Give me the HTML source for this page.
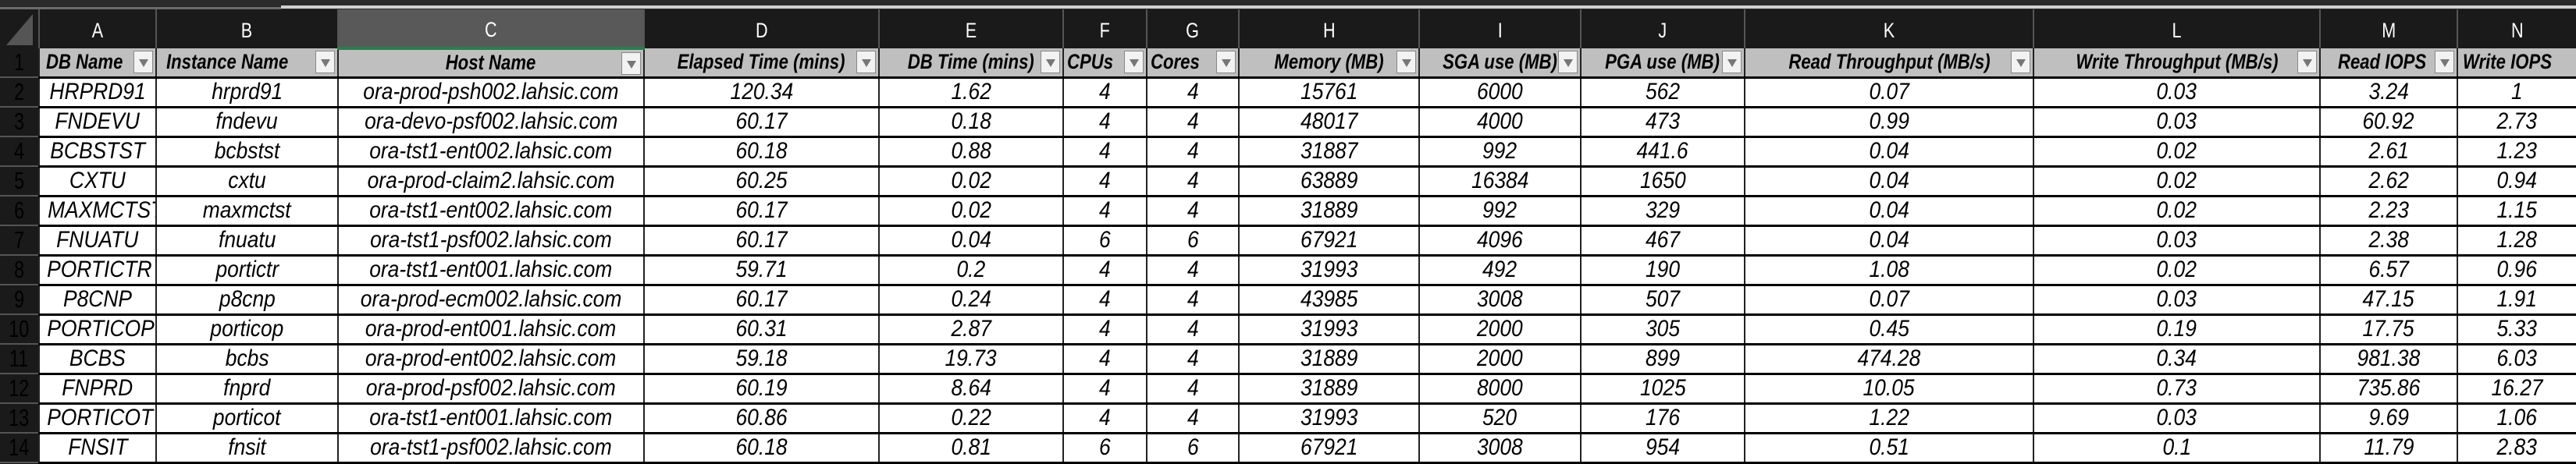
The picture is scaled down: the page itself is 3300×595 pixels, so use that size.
<!DOCTYPE html>
<html><head><meta charset="utf-8"><style>
*{margin:0;padding:0;box-sizing:border-box}
body{width:3300px;height:594px;background:#1a1a1a;overflow:hidden;position:relative;font-family:"Liberation Sans",sans-serif}
#top{position:absolute;left:0;top:0;width:3300px;height:12px;background:#2a2a2a}
#top .l{position:absolute;left:360px;top:7px;width:2940px;height:4px;background:#d0d0d0}
#top .l2{position:absolute;left:0;top:9px;width:360px;height:3px;background:#6a6a6a}
table{position:absolute;left:0;top:12px;border-collapse:collapse;table-layout:fixed;width:3300px}
td{overflow:hidden;white-space:nowrap;text-align:center;padding:0}
td span.t{display:inline-block;transform:scaleX(0.8);transform-origin:center}
tr.h td{height:50px;background:#1a1a1a;color:#fff;font-size:27px;border-left:2px solid #555;padding-top:4px}
tr.h td.sel{background:#595959;border-bottom:4px solid #2e7d4f}
tr.h td.corner{border-left:none;background:#1a1a1a;position:relative}
tr.f td{height:35px;background:#bfbfbf;font-weight:bold;font-style:italic;font-size:27px;color:#000;border-left:2px solid #222;position:relative;border-bottom:3px solid #000}
tr.f td span.t{transform:scaleX(0.82)}
tr.d td{height:38px;background:#fff;font-style:italic;font-size:30px;color:#000;border-left:2px solid #222;border-bottom:3px solid #000}
tr.d td span.t{transform:scaleX(0.88)}
td.rn{background:#1a1a1a!important;color:#fff;font-style:normal!important;font-weight:normal!important;font-size:31px!important;border-left:none!important;border-bottom:2px solid #555!important;text-align:center}
tr td.rn span.t{transform:scaleX(0.75)}
.dd{position:absolute;right:3px;top:3px;width:25px;height:29px;background:#f2f2f2;border:1px solid #888}
.dd:after{content:"";position:absolute;left:6px;top:10px;border-left:6px solid transparent;border-right:6px solid transparent;border-top:10px solid #777}
tr.f td.la span.t{transform-origin:left}
</style></head><body>
<div id="top"><div class="l2"></div><div class="l"></div></div>
<table>
<colgroup><col style="width:50px"><col style="width:150px"><col style="width:233px"><col style="width:392px"><col style="width:301px"><col style="width:236px"><col style="width:107px"><col style="width:118px"><col style="width:231px"><col style="width:207px"><col style="width:210px"><col style="width:370px"><col style="width:367px"><col style="width:176px"><col style="width:152px"></colgroup>
<tr class="h"><td class="corner"><svg width="40" height="46" style="position:absolute;left:4px;top:2px"><polygon points="4,44 38,44 38,4" fill="#555"/></svg></td><td><span class="t">A</span></td><td><span class="t">B</span></td><td class="sel"><span class="t">C</span></td><td><span class="t">D</span></td><td><span class="t">E</span></td><td><span class="t">F</span></td><td><span class="t">G</span></td><td><span class="t">H</span></td><td><span class="t">I</span></td><td><span class="t">J</span></td><td><span class="t">K</span></td><td><span class="t">L</span></td><td><span class="t">M</span></td><td><span class="t">N</span></td></tr>
<tr class="f"><td class="rn"><span class="t">1</span></td>
<td class="la" style="text-align:left;padding-left:8px"><span class="t">DB Name</span><span class="dd"></span></td>
<td class="la" style="text-align:left;padding-left:12px"><span class="t">Instance Name</span><span class="dd"></span></td>
<td><span class="t">Host Name</span><span class="dd"></span></td>
<td><span class="t">Elapsed Time (mins)</span><span class="dd"></span></td>
<td><span class="t">DB Time (mins)</span><span class="dd"></span></td>
<td class="la" style="text-align:left;padding-left:4px"><span class="t">CPUs</span><span class="dd"></span></td>
<td class="la" style="text-align:left;padding-left:4px"><span class="t">Cores</span><span class="dd"></span></td>
<td><span class="t">Memory (MB)</span><span class="dd"></span></td>
<td><span class="t">SGA use (MB)</span><span class="dd"></span></td>
<td><span class="t">PGA use (MB)</span><span class="dd"></span></td>
<td><span class="t">Read Throughput (MB/s)</span><span class="dd"></span></td>
<td><span class="t">Write Throughput (MB/s)</span><span class="dd"></span></td>
<td class="la" style="text-align:left;padding-left:22px"><span class="t">Read IOPS</span><span class="dd"></span></td>
<td class="la" style="text-align:left;padding-left:6px"><span class="t">Write IOPS</span></td></tr>
<tr class="d"><td class="rn"><span class="t">2</span></td><td><span class="t">HRPRD91</span></td><td><span class="t">hrprd91</span></td><td><span class="t">ora-prod-psh002.lahsic.com</span></td><td><span class="t">120.34</span></td><td><span class="t">1.62</span></td><td><span class="t">4</span></td><td><span class="t">4</span></td><td><span class="t">15761</span></td><td><span class="t">6000</span></td><td><span class="t">562</span></td><td><span class="t">0.07</span></td><td><span class="t">0.03</span></td><td><span class="t">3.24</span></td><td><span class="t">1</span></td></tr>
<tr class="d"><td class="rn"><span class="t">3</span></td><td><span class="t">FNDEVU</span></td><td><span class="t">fndevu</span></td><td><span class="t">ora-devo-psf002.lahsic.com</span></td><td><span class="t">60.17</span></td><td><span class="t">0.18</span></td><td><span class="t">4</span></td><td><span class="t">4</span></td><td><span class="t">48017</span></td><td><span class="t">4000</span></td><td><span class="t">473</span></td><td><span class="t">0.99</span></td><td><span class="t">0.03</span></td><td><span class="t">60.92</span></td><td><span class="t">2.73</span></td></tr>
<tr class="d"><td class="rn"><span class="t">4</span></td><td><span class="t">BCBSTST</span></td><td><span class="t">bcbstst</span></td><td><span class="t">ora-tst1-ent002.lahsic.com</span></td><td><span class="t">60.18</span></td><td><span class="t">0.88</span></td><td><span class="t">4</span></td><td><span class="t">4</span></td><td><span class="t">31887</span></td><td><span class="t">992</span></td><td><span class="t">441.6</span></td><td><span class="t">0.04</span></td><td><span class="t">0.02</span></td><td><span class="t">2.61</span></td><td><span class="t">1.23</span></td></tr>
<tr class="d"><td class="rn"><span class="t">5</span></td><td><span class="t">CXTU</span></td><td><span class="t">cxtu</span></td><td><span class="t">ora-prod-claim2.lahsic.com</span></td><td><span class="t">60.25</span></td><td><span class="t">0.02</span></td><td><span class="t">4</span></td><td><span class="t">4</span></td><td><span class="t">63889</span></td><td><span class="t">16384</span></td><td><span class="t">1650</span></td><td><span class="t">0.04</span></td><td><span class="t">0.02</span></td><td><span class="t">2.62</span></td><td><span class="t">0.94</span></td></tr>
<tr class="d"><td class="rn"><span class="t">6</span></td><td><span class="t">MAXMCTST</span></td><td><span class="t">maxmctst</span></td><td><span class="t">ora-tst1-ent002.lahsic.com</span></td><td><span class="t">60.17</span></td><td><span class="t">0.02</span></td><td><span class="t">4</span></td><td><span class="t">4</span></td><td><span class="t">31889</span></td><td><span class="t">992</span></td><td><span class="t">329</span></td><td><span class="t">0.04</span></td><td><span class="t">0.02</span></td><td><span class="t">2.23</span></td><td><span class="t">1.15</span></td></tr>
<tr class="d"><td class="rn"><span class="t">7</span></td><td><span class="t">FNUATU</span></td><td><span class="t">fnuatu</span></td><td><span class="t">ora-tst1-psf002.lahsic.com</span></td><td><span class="t">60.17</span></td><td><span class="t">0.04</span></td><td><span class="t">6</span></td><td><span class="t">6</span></td><td><span class="t">67921</span></td><td><span class="t">4096</span></td><td><span class="t">467</span></td><td><span class="t">0.04</span></td><td><span class="t">0.03</span></td><td><span class="t">2.38</span></td><td><span class="t">1.28</span></td></tr>
<tr class="d"><td class="rn"><span class="t">8</span></td><td><span class="t">PORTICTR</span></td><td><span class="t">portictr</span></td><td><span class="t">ora-tst1-ent001.lahsic.com</span></td><td><span class="t">59.71</span></td><td><span class="t">0.2</span></td><td><span class="t">4</span></td><td><span class="t">4</span></td><td><span class="t">31993</span></td><td><span class="t">492</span></td><td><span class="t">190</span></td><td><span class="t">1.08</span></td><td><span class="t">0.02</span></td><td><span class="t">6.57</span></td><td><span class="t">0.96</span></td></tr>
<tr class="d"><td class="rn"><span class="t">9</span></td><td><span class="t">P8CNP</span></td><td><span class="t">p8cnp</span></td><td><span class="t">ora-prod-ecm002.lahsic.com</span></td><td><span class="t">60.17</span></td><td><span class="t">0.24</span></td><td><span class="t">4</span></td><td><span class="t">4</span></td><td><span class="t">43985</span></td><td><span class="t">3008</span></td><td><span class="t">507</span></td><td><span class="t">0.07</span></td><td><span class="t">0.03</span></td><td><span class="t">47.15</span></td><td><span class="t">1.91</span></td></tr>
<tr class="d"><td class="rn"><span class="t">10</span></td><td><span class="t">PORTICOP</span></td><td><span class="t">porticop</span></td><td><span class="t">ora-prod-ent001.lahsic.com</span></td><td><span class="t">60.31</span></td><td><span class="t">2.87</span></td><td><span class="t">4</span></td><td><span class="t">4</span></td><td><span class="t">31993</span></td><td><span class="t">2000</span></td><td><span class="t">305</span></td><td><span class="t">0.45</span></td><td><span class="t">0.19</span></td><td><span class="t">17.75</span></td><td><span class="t">5.33</span></td></tr>
<tr class="d"><td class="rn"><span class="t">11</span></td><td><span class="t">BCBS</span></td><td><span class="t">bcbs</span></td><td><span class="t">ora-prod-ent002.lahsic.com</span></td><td><span class="t">59.18</span></td><td><span class="t">19.73</span></td><td><span class="t">4</span></td><td><span class="t">4</span></td><td><span class="t">31889</span></td><td><span class="t">2000</span></td><td><span class="t">899</span></td><td><span class="t">474.28</span></td><td><span class="t">0.34</span></td><td><span class="t">981.38</span></td><td><span class="t">6.03</span></td></tr>
<tr class="d"><td class="rn"><span class="t">12</span></td><td><span class="t">FNPRD</span></td><td><span class="t">fnprd</span></td><td><span class="t">ora-prod-psf002.lahsic.com</span></td><td><span class="t">60.19</span></td><td><span class="t">8.64</span></td><td><span class="t">4</span></td><td><span class="t">4</span></td><td><span class="t">31889</span></td><td><span class="t">8000</span></td><td><span class="t">1025</span></td><td><span class="t">10.05</span></td><td><span class="t">0.73</span></td><td><span class="t">735.86</span></td><td><span class="t">16.27</span></td></tr>
<tr class="d"><td class="rn"><span class="t">13</span></td><td><span class="t">PORTICOT</span></td><td><span class="t">porticot</span></td><td><span class="t">ora-tst1-ent001.lahsic.com</span></td><td><span class="t">60.86</span></td><td><span class="t">0.22</span></td><td><span class="t">4</span></td><td><span class="t">4</span></td><td><span class="t">31993</span></td><td><span class="t">520</span></td><td><span class="t">176</span></td><td><span class="t">1.22</span></td><td><span class="t">0.03</span></td><td><span class="t">9.69</span></td><td><span class="t">1.06</span></td></tr>
<tr class="d"><td class="rn"><span class="t">14</span></td><td><span class="t">FNSIT</span></td><td><span class="t">fnsit</span></td><td><span class="t">ora-tst1-psf002.lahsic.com</span></td><td><span class="t">60.18</span></td><td><span class="t">0.81</span></td><td><span class="t">6</span></td><td><span class="t">6</span></td><td><span class="t">67921</span></td><td><span class="t">3008</span></td><td><span class="t">954</span></td><td><span class="t">0.51</span></td><td><span class="t">0.1</span></td><td><span class="t">11.79</span></td><td><span class="t">2.83</span></td></tr>
</table>
</body></html>
